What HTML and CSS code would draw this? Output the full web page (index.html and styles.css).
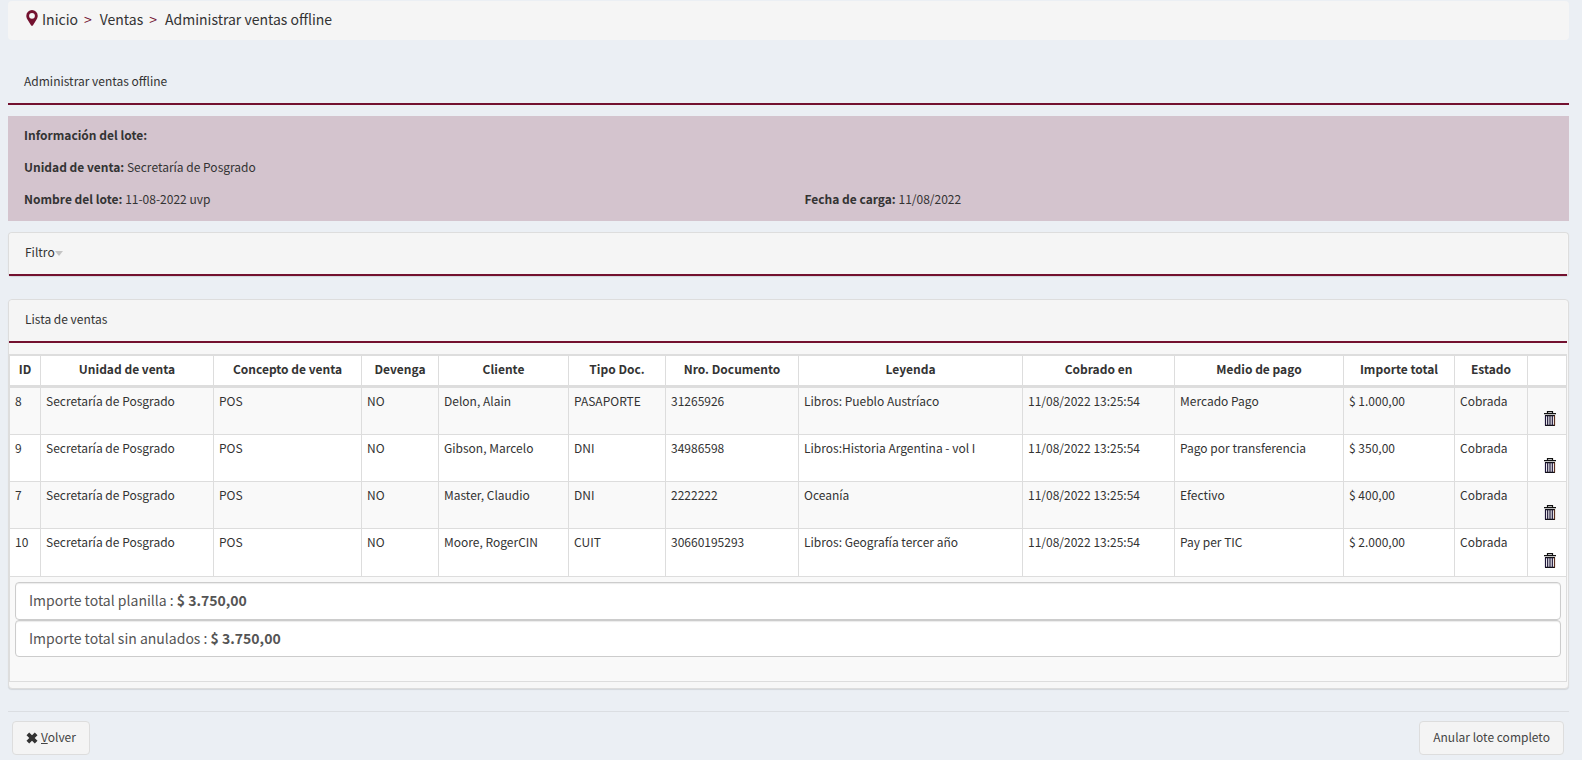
FILE: index.html
```html
<!DOCTYPE html>
<html lang="es">
<head>
<meta charset="utf-8">
<title>Administrar ventas offline</title>
<link rel="stylesheet" href="styles.css">
</head>
<body>
<svg class="sprite" aria-hidden="true">
  <symbol id="trash" viewBox="0 0 14 15">
    <path d="M4.500 2V.6h5V2" fill="none" stroke="#111" stroke-width="1.200"/>
    <path d="M1 2h12v1.200H1zM2 4h10v1.200H2zM2 13.800h10V15H2z" fill="#111"/>
    <path d="M2.500 4.500v10M4.700 4.500v10M7 4.500v10M9.300 4.500v10" stroke="#1c1438" stroke-width="1.200"/>
    <path d="M11.500 4.500v10" stroke="#5a3020" stroke-width="1.200"/>
  </symbol>
</svg>
<nav class="breadcrumb" aria-label="Ruta">
  <svg class="pin" viewBox="0 0 12 16" aria-hidden="true"><path fill-rule="evenodd" d="M6 0a5.7 5.7 0 0 1 5.7 5.7c0 1.4-.4 2.3-1 3.5L7 15.2c-.4.8-1.600.8-2 0L1.300 9.200C.7 8 .3 7.100.3 5.700A5.700 5.700 0 0 1 6 0zm0 2.900a2.900 2.900 0 1 0 0 5.800 2.900 2.900 0 0 0 0-5.800z"/></svg>
  <ol class="crumbs">
    <li><a href="#">Inicio</a></li>
    <li><a href="#">Ventas</a></li>
    <li>Administrar ventas offline</li>
  </ol>
</nav>
<main>
  <h1 class="heading page-heading">Administrar ventas offline</h1>
  <section class="lot">
    <p><b>Información del lote:</b></p>
    <p><b>Unidad de venta:</b> Secretaría de Posgrado</p>
    <div class="lot-row">
      <p><b>Nombre del lote:</b> 11-08-2022 uvp</p>
      <p><b>Fecha de carga:</b> 11/08/2022</p>
    </div>
  </section>
  <section class="panel filter">
    <h2 class="heading"><button class="toggle" type="button">Filtro<span class="caret"></span></button></h2>
  </section>
  <section class="panel list">
    <h2 class="heading">Lista de ventas</h2>
    <table class="sales">
      <colgroup><col class="c-id"><col class="c-unit"><col class="c-concept"><col class="c-accrue"><col class="c-client"><col class="c-doctype"><col class="c-docnum"><col class="c-legend"><col class="c-date"><col class="c-method"><col class="c-amount"><col class="c-state"><col class="c-action"></colgroup>
      <thead>
        <tr><th>ID</th><th>Unidad de venta</th><th>Concepto de venta</th><th>Devenga</th><th>Cliente</th><th>Tipo Doc.</th><th>Nro. Documento</th><th>Leyenda</th><th>Cobrado en</th><th>Medio de pago</th><th>Importe total</th><th>Estado</th><th></th></tr>
      </thead>
      <tbody>
        <tr><td>8</td><td>Secretaría de Posgrado</td><td>POS</td><td>NO</td><td>Delon, Alain</td><td>PASAPORTE</td><td>31265926</td><td>Libros: Pueblo Austríaco</td><td>11/08/2022 13:25:54</td><td>Mercado Pago</td><td>$ 1.000,00</td><td>Cobrada</td><td class="action"><button class="delete" type="button" aria-label="Anular"><svg><use href="#trash"/></svg></button></td></tr>
        <tr><td>9</td><td>Secretaría de Posgrado</td><td>POS</td><td>NO</td><td>Gibson, Marcelo</td><td>DNI</td><td>34986598</td><td>Libros:Historia Argentina - vol I</td><td>11/08/2022 13:25:54</td><td>Pago por transferencia</td><td>$ 350,00</td><td>Cobrada</td><td class="action"><button class="delete" type="button" aria-label="Anular"><svg><use href="#trash"/></svg></button></td></tr>
        <tr><td>7</td><td>Secretaría de Posgrado</td><td>POS</td><td>NO</td><td>Master, Claudio</td><td>DNI</td><td>2222222</td><td>Oceanía</td><td>11/08/2022 13:25:54</td><td>Efectivo</td><td>$ 400,00</td><td>Cobrada</td><td class="action"><button class="delete" type="button" aria-label="Anular"><svg><use href="#trash"/></svg></button></td></tr>
        <tr><td>10</td><td>Secretaría de Posgrado</td><td>POS</td><td>NO</td><td>Moore, RogerCIN</td><td>CUIT</td><td>30660195293</td><td>Libros: Geografía tercer año</td><td>11/08/2022 13:25:54</td><td>Pay per TIC</td><td>$ 2.000,00</td><td>Cobrada</td><td class="action"><button class="delete" type="button" aria-label="Anular"><svg><use href="#trash"/></svg></button></td></tr>
      </tbody>
      <tfoot>
        <tr><td colspan="13" class="totals">
          <div class="total">Importe total planilla : <b>$ 3.750,00</b></div>
          <div class="total">Importe total sin anulados : <b>$ 3.750,00</b></div>
        </td></tr>
      </tfoot>
    </table>
  </section>
</main>
<footer class="actions">
  <button class="btn" type="button"><svg class="cross" viewBox="0 0 12 12" aria-hidden="true"><path d="M3.200.5 6 3.300 8.800.5l2.700 2.700L8.700 6l2.800 2.800-2.700 2.700L6 8.700l-2.800 2.800L.5 8.800 3.300 6 .5 3.200z"/></svg><span><u>V</u>olver</span></button>
  <button class="btn" type="button">Anular lote completo</button>
</footer>
</body>
</html>
```
FILE: styles.css
```css
* { box-sizing: border-box; }

body {
  margin: 0;
  padding: 1px 13px 5px 8px;
  background: #ebeff4;
  color: #333;
  font: 12px/20px "Noto Sans CJK SC", "Open Sans", sans-serif;
}

h1, h2, p, ol { margin: 0; padding: 0; }
button { font: inherit; color: inherit; }
.sprite { display: none; }

.breadcrumb {
  display: flex;
  align-items: center;
  height: 39px;
  padding: 0 18px 3px;
  border-radius: 4px;
  background: #f5f5f5;
  font-size: 14px;
}
.pin { width: 12px; height: 16px; margin: 0 4px 2px 0; fill: #73112f; }
.crumbs { display: flex; list-style: none; }
.crumbs a { color: inherit; text-decoration: none; }
.crumbs li + li::before { content: ">"; padding: 0 8px 0 6px; color: #73112f; }

.heading {
  padding: 11px 16px;
  border-bottom: 2px solid #73112f;
  font-size: 12px;
  font-weight: 400;
}
.page-heading { margin-top: 20px; padding-bottom: 12px; }

.lot {
  display: grid;
  gap: 12px;
  margin: 11px 0;
  padding: 9px 16px 12px;
  background: #d4c4ce;
}
.lot-row { display: grid; grid-template-columns: 1fr 1fr; column-gap: 32px; }

.panel {
  padding-right: 1px;
  border: 1px solid #ddd;
  border-radius: 4px;
  background: #f7f7f7;
  box-shadow: 0 1px 1px rgba(0, 0, 0, .1);
}
.panel .heading { padding: 9px 16px 12px; border-radius: 4px 4px 0 0; background: #f5f5f5; }
.filter { margin-bottom: 23px; border-bottom: 0; }
.list { padding-bottom: 6px; }

.toggle {
  display: flex;
  align-items: center;
  padding: 0;
  border: 0;
  background: none;
}
.caret {
  margin-top: 2px;
  border: 4px solid transparent;
  border-top: 5px solid #c4c4c4;
  border-bottom: 0;
}

.sales {
  width: 100%;
  margin-top: 11px;
  border-collapse: separate;
  border-spacing: 0;
  border: solid #ddd;
  border-width: 2px 0 0 1px;
  table-layout: fixed;
}
.c-id { width: 31px; }
.c-unit { width: 173px; }
.c-concept { width: 148px; }
.c-accrue { width: 77px; }
.c-client { width: 130px; }
.c-doctype { width: 97px; }
.c-docnum { width: 133px; }
.c-legend { width: 224px; }
.c-date { width: 152px; }
.c-method { width: 169px; }
.c-amount { width: 111px; }
.c-state { width: 73px; }
.c-action { width: 39px; }

.sales th, .sales td {
  padding: 3px 0 5px 5px;
  border: solid #ddd;
  border-width: 0 1px 1px 0;
  text-align: left;
  vertical-align: top;
  white-space: nowrap;
}
.sales th {
  padding: 3px 0 6px;
  border-bottom-width: 3px;
  background: #fff;
  text-align: center;
}
.sales tbody td { height: 47px; background: #fff; }
.sales tbody tr:last-child td { height: 48px; }
.sales tbody tr:nth-child(odd) td, .sales tfoot .totals { background: #f9f9f9; }
.sales .action { padding: 0 9px 8px 0; text-align: right; vertical-align: bottom; }
.delete { padding: 0; border: 0; background: none; vertical-align: bottom; }
.delete svg { display: block; width: 14px; height: 15px; }

.sales .totals { padding: 5px 5px 24px; }
.total {
  padding: 7px 13px 8px;
  border: 1px solid #ccc;
  border-radius: 4px;
  background: #fff;
  box-shadow: inset 0 1px 1px rgba(0, 0, 0, .08);
  color: #555;
  font-size: 14px;
}
.total:first-child { padding-bottom: 9px; }

.actions {
  display: flex;
  justify-content: space-between;
  margin-top: 22px;
  padding: 9px 5px 0 4px;
  border-top: 1px solid #dbdee2;
}
.btn {
  display: flex;
  align-items: center;
  gap: 3px;
  padding: 5px 13px 7px;
  border: 1px solid #ddd;
  border-radius: 4px;
  background: #f4f4f4;
  color: #444;
}
.cross { width: 12px; height: 12px; margin-top: 2px; fill: #333; }
```
